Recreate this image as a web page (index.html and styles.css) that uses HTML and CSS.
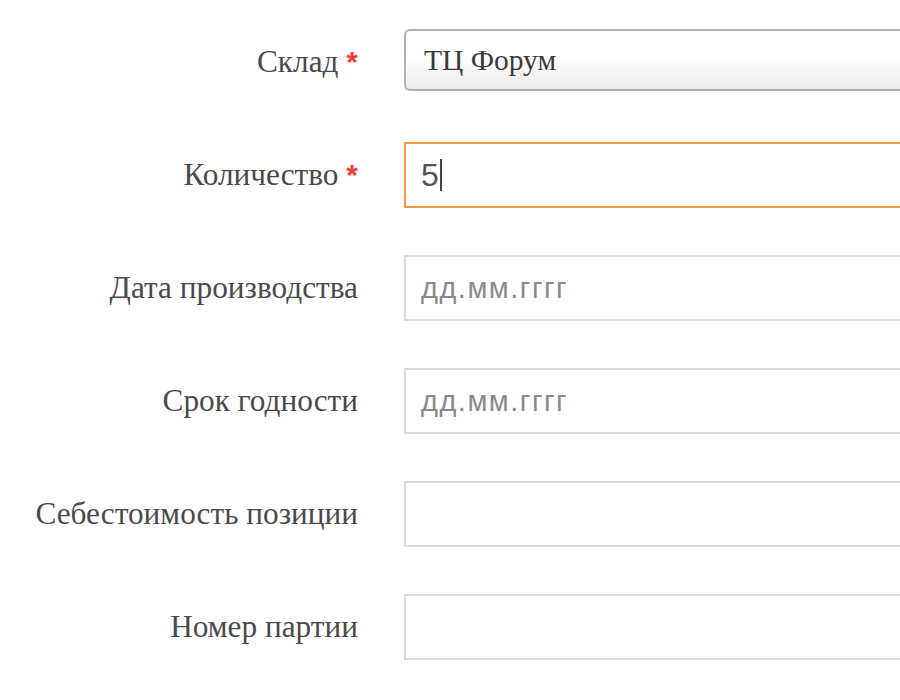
FILE: index.html
```html
<!DOCTYPE html>
<html lang="ru">
<head>
    <meta charset="UTF-8">
    <title>Партия товара</title>
    <link rel="stylesheet" href="styles.css">
</head>
<body>
    <form class="batch-form">
        <div class="row">
            <label class="label">Склад <span class="req">*</span></label>
            <div class="select">ТЦ Форум</div>
        </div>
        <div class="row">
            <label class="label">Количество <span class="req">*</span></label>
            <div class="field field-active">5<span class="caret"></span></div>
        </div>
        <div class="row">
            <label class="label">Дата производства</label>
            <div class="field"><span class="placeholder">дд.мм.гггг</span></div>
        </div>
        <div class="row">
            <label class="label">Срок годности</label>
            <div class="field"><span class="placeholder">дд.мм.гггг</span></div>
        </div>
        <div class="row">
            <label class="label">Себестоимость позиции</label>
            <div class="field"></div>
        </div>
        <div class="row">
            <label class="label">Номер партии</label>
            <div class="field"></div>
        </div>
    </form>
</body>
</html>
```

FILE: styles.css
```css
* {
    box-sizing: border-box;
}

body {
    margin: 0;
    background: #ffffff;
}

.batch-form {
    padding-top: 29px;
}

.row {
    display: flex;
    align-items: center;
    height: 66px;
    margin-bottom: 47px;
}

.label {
    flex-shrink: 0;
    width: 358px;
    margin-right: 46px;
    text-align: right;
    font-family: "Liberation Serif", serif;
    font-size: 31.3px;
    color: #4a4a4a;
}

.req {
    color: #f23c3c;
    font-family: "Liberation Sans", sans-serif;
    font-weight: bold;
    font-size: 30px;
}

.select {
    flex: 1;
    align-self: flex-start;
    height: 62px;
    padding-left: 18px;
    display: flex;
    align-items: center;
    border: 2px solid #b0b0b0;
    border-right: 0;
    border-radius: 6px 0 0 6px;
    background: linear-gradient(#ffffff 45%, #ebebeb);
    font-family: "Liberation Serif", serif;
    font-size: 29.5px;
    color: #3a3a3a;
}

.field {
    flex: 1;
    height: 66px;
    padding-left: 15px;
    display: flex;
    align-items: center;
    border: 2px solid #dadada;
    border-right: 0;
    font-family: "Liberation Sans", sans-serif;
    font-size: 32px;
    color: #555555;
}

.field-active {
    border-color: #f89a3c;
}

.caret {
    width: 2px;
    height: 32px;
    margin-left: 1px;
    background: #444444;
}

.placeholder {
    color: #8a8a8a;
    font-size: 29px;
    letter-spacing: 1.5px;
}
```
